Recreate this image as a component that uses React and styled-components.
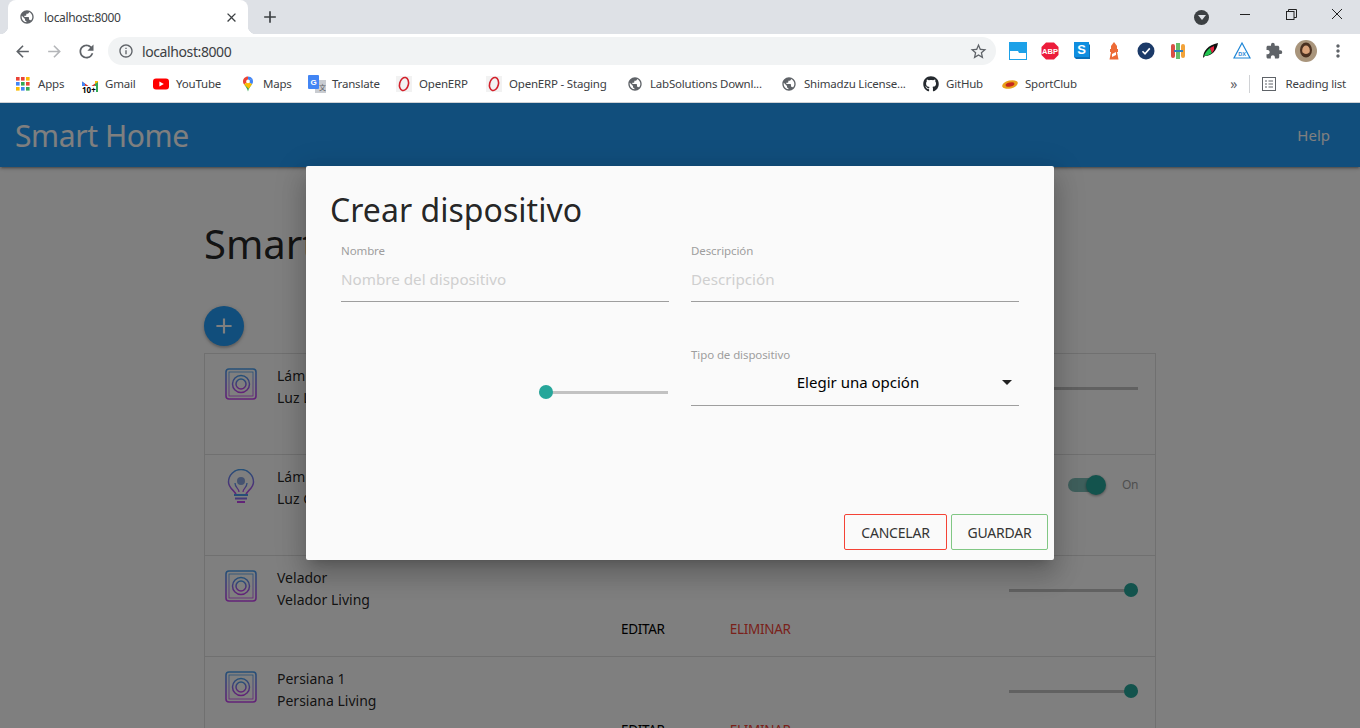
import React from "react";
import styled, { createGlobalStyle } from "styled-components";
import {
  MdAdd,
  MdArrowBack,
  MdArrowForward,
  MdClose,
  MdExtension,
  MdInfoOutline,
  MdMoreVert,
  MdPublic,
  MdRefresh,
  MdStarBorder,
} from "react-icons/md";
import { FaGithub } from "react-icons/fa";

const GlobalStyle = createGlobalStyle`
  html, body {
    margin: 0;
    padding: 0;
    height: 100%;
    overflow: hidden;
    background: #fff;
    font-family: "Noto Sans", "Open Sans", sans-serif;
  }
  * { box-sizing: border-box; }
`;

const AppsIcon = () => (
  <svg width="16" height="16" viewBox="0 0 16 16">
    {[
      ["#ea4335", "#ea4335", "#fbbc04"],
      ["#4285f4", "#34a853", "#ea4335"],
      ["#fbbc04", "#4285f4", "#34a853"],
    ].map((row, y) =>
      row.map((c, x) => <rect key={`${x}${y}`} x={1 + x * 5} y={1 + y * 5} width="3.6" height="3.6" fill={c} />)
    )}
  </svg>
);

const GmailIcon = () => (
  <GmailWrap>
    <svg width="16" height="12" viewBox="0 0 16 12">
      <path d="M0 1.5 L8 7 L16 1.5 V12 H13 V5.5 L8 9 L3 5.5 V12 H0 Z" fill="#d93025" />
      <path d="M0 1.5 L3 3.6 V12 H0 Z" fill="#4285f4" />
      <path d="M16 1.5 L13 3.6 V12 H16 Z" fill="#34a853" />
      <path d="M13 1 L16 1 V2 L13 4 Z" fill="#fbbc04" />
    </svg>
    <GmailBadge>10+</GmailBadge>
  </GmailWrap>
);

const YoutubeIcon = () => (
  <svg width="16" height="16" viewBox="0 0 16 16">
    <rect x="0" y="2.5" width="16" height="11" rx="3" fill="#f00" />
    <path d="M6.4 5.5 L10.8 8 L6.4 10.5 Z" fill="#fff" />
  </svg>
);

const MapsIcon = () => (
  <svg width="16" height="16" viewBox="0 0 16 16">
    <path d="M8 0.5 C4.8 0.5 3 2.9 3 5.4 C3 6.6 3.5 7.6 4.1 8.4 L8 5.4 Z" fill="#ea4335" />
    <path d="M8 0.5 C9.8 0.5 11.3 1.3 12.2 2.6 L8 5.4 Z" fill="#4285f4" />
    <path d="M12.2 2.6 C12.7 3.4 13 4.4 13 5.4 C13 6.4 12.6 7.3 12 8.2 L8 5.4 Z" fill="#4285f4" />
    <path d="M4.1 8.4 L12 8.2 C10.6 10.2 8.7 12.2 8 15.5 C7.4 12.6 5.6 10.4 4.1 8.4 Z" fill="#34a853" />
    <path d="M4.1 8.4 L8 5.4 L12 8.2 C10.8 9.8 9.6 11.2 8.8 12.8 Z" fill="#fbbc04" />
    <circle cx="8" cy="5.4" r="1.8" fill="#fff" />
  </svg>
);

const TranslateIcon = () => (
  <svg width="18" height="18" viewBox="0 0 18 18">
    <rect x="7" y="5" width="11" height="13" fill="#c9ccd1" />
    <rect x="0" y="0" width="11" height="14" rx="1" fill="#4285f4" />
    <text x="2.6" y="10" fontSize="8" fontWeight="700" fill="#fff" fontFamily="Liberation Sans">G</text>
    <text x="11" y="15" fontSize="7" fill="#5f6368" fontFamily="Noto Sans CJK SC">文</text>
  </svg>
);

const OperaIcon = () => (
  <svg width="16" height="16" viewBox="0 0 16 16">
    <rect width="16" height="16" fill="#f2f2f2" />
    <ellipse cx="8" cy="8" rx="4.4" ry="6.6" transform="rotate(14 8 8)" fill="none" stroke="#d3202b" strokeWidth="1.6" />
  </svg>
);

const SportIcon = () => (
  <svg width="18" height="12" viewBox="0 0 18 12">
    <ellipse cx="9" cy="6.5" rx="8" ry="4" transform="rotate(-14 9 6.5)" fill="#e8a11b" />
    <ellipse cx="9" cy="6.5" rx="4.5" ry="2" transform="rotate(-14 9 6.5)" fill="#c6271d" />
  </svg>
);

const Square = ({ children }) => (
  <svg width="20" height="20" viewBox="0 0 20 20">
    {children}
  </svg>
);

const extensions = [
  <Square key="a">
    <rect x="1" y="1" width="18" height="18" fill="#1da1e8" />
    <path d="M2 10 H10 L11 12 H18 V18 H2 Z" fill="#fff" />
  </Square>,
  <Square key="b">
    <path d="M6 1.5 H14 L18.5 6 V14 L14 18.5 H6 L1.5 14 V6 Z" fill="#ec1c3b" />
    <text x="10" y="13" textAnchor="middle" fontSize="7.5" fontWeight="700" fill="#fff" fontFamily="Liberation Sans">ABP</text>
  </Square>,
  <Square key="c">
    <path d="M2 2 H16 L18 4 V18 L16 18 H4 L2 16 Z" fill="#0b6fb8" />
    <rect x="2" y="1" width="15" height="15" fill="#0f8ee0" />
    <text x="9.5" y="13" textAnchor="middle" fontSize="13" fontWeight="700" fill="#fff" fontFamily="Liberation Sans">S</text>
  </Square>,
  <Square key="d">
    <path d="M10 1 L13 5 V8 H14 V11 H13 L14.5 18.5 H5.5 L7 11 H6 V8 H7 V5 Z" fill="#ed6a35" />
    <path d="M8 13 L12 11 V14 L8 16 Z" fill="#fff" />
  </Square>,
  <Square key="e">
    <circle cx="10" cy="10" r="8.5" fill="#1b3a68" />
    <path d="M6.5 10.2 L9 12.8 L13.8 7.4" stroke="#fff" strokeWidth="1.6" fill="none" />
  </Square>,
  <Square key="f">
    <rect x="3" y="3" width="4" height="14" rx="2" fill="#d94f45" />
    <rect x="8" y="2" width="4" height="16" fill="#4caf50" opacity="0.85" />
    <rect x="13" y="3" width="4" height="14" rx="2" fill="#f2a33a" />
    <rect x="6" y="9" width="9" height="2" fill="#2f7fc1" />
  </Square>,
  <Square key="g">
    <path d="M3 17 C3 10 8 4 18 2 C17 9 12 15 5 15 Z" fill="#111" />
    <path d="M4 15 C5 12 7 9 10 7 L12 12 C9 14 7 15 4 15 Z" fill="#23c552" />
    <path d="M10 7 L14 5 L14 9 L12 12 Z" fill="#e8213f" />
  </Square>,
  <Square key="h">
    <path d="M10 2 L18 17 H2 Z" fill="none" stroke="#1f86d6" strokeWidth="1.2" />
    <text x="10" y="15" textAnchor="middle" fontSize="5.5" fontWeight="700" fill="#1f86d6" fontFamily="Liberation Sans">DX</text>
  </Square>,
];

const bookmarks = [
  { icon: <AppsIcon />, label: "Apps", w: 27 },
  { icon: <GmailIcon />, label: "Gmail", w: 31 },
  { icon: <YoutubeIcon />, label: "YouTube", w: 47 },
  { icon: <MapsIcon />, label: "Maps", w: 29 },
  { icon: <TranslateIcon />, label: "Translate", w: 47 },
  { icon: <OperaIcon />, label: "OpenERP", w: 50 },
  { icon: <OperaIcon />, label: "OpenERP - Staging", w: 101 },
  { icon: <MdPublic size={16} color="#5f6368" />, label: "LabSolutions Downl...", w: 114 },
  { icon: <MdPublic size={16} color="#5f6368" />, label: "Shimadzu License...", w: 102 },
  { icon: <FaGithub size={16} color="#24292e" />, label: "GitHub", w: 39 },
  { icon: <SportIcon />, label: "SportClub", w: 53 },
];

const PlugIcon = () => (
  <svg width="32" height="32" viewBox="0 0 32 32" fill="none">
    <defs>
      <linearGradient id="plugGrad" x1="0" y1="0" x2="0" y2="1">
        <stop offset="0" stopColor="#4aa0f0" />
        <stop offset="1" stopColor="#c744f0" />
      </linearGradient>
    </defs>
    <rect x="1" y="1" width="30" height="30" rx="3" stroke="url(#plugGrad)" strokeWidth="1.6" />
    <rect x="4" y="4" width="24" height="24" stroke="url(#plugGrad)" strokeWidth="0.8" />
    <circle cx="16" cy="16" r="8.5" stroke="url(#plugGrad)" strokeWidth="1.5" />
    <circle cx="16" cy="16" r="5" stroke="url(#plugGrad)" strokeWidth="1.5" />
    <path d="M16 8 V11.5" stroke="url(#plugGrad)" strokeWidth="1.6" />
  </svg>
);

const BulbIcon = () => (
  <svg width="32" height="36" viewBox="0 0 32 36" fill="none">
    <defs>
      <linearGradient id="bulbGrad" x1="0" y1="0" x2="0" y2="1">
        <stop offset="0" stopColor="#4aa0f0" />
        <stop offset="1" stopColor="#c744f0" />
      </linearGradient>
    </defs>
    <path d="M11 26 C11 22 3.5 20 3.5 13 A12.5 12.5 0 0 1 28.5 13 C28.5 20 21 22 21 26 Z" stroke="url(#bulbGrad)" strokeWidth="1.5" />
    <circle cx="16" cy="12" r="4" fill="#8ba7e0" />
    <path d="M10 14 C10 19 14 19 14 23 M22 14 C22 19 18 19 18 23" stroke="url(#bulbGrad)" strokeWidth="1.3" />
    <path d="M9 26 H23 M10 29.5 H22 M12 33 H20" stroke="url(#bulbGrad)" strokeWidth="2" />
  </svg>
);

const devices = [
  { name: "Lámpara 1", info: "Luz Living", icon: "plug", control: "slider", value: 0 },
  { name: "Lámpara 2", info: "Luz Comedor", icon: "bulb", control: "switch" },
  { name: "Velador", info: "Velador Living", icon: "plug", control: "slider", value: 100 },
  { name: "Persiana 1", info: "Persiana Living", icon: "plug", control: "slider", value: 100 },
];

const App = () => {
  return (
    <Page>
      <GlobalStyle />
      <TabStrip>
        <Tab>
          <MdPublic size={16} color="#5f6368" />
          <TabTitle>localhost:8000</TabTitle>
          <MdClose size={15} color="#3c4043" />
        </Tab>
        <NewTab>
          <MdAdd size={20} color="#3c4043" />
        </NewTab>
        <ProfileDot />
        <WindowButtons>
          <WinButton>
            <MinIcon />
          </WinButton>
          <WinButton>
            <svg width="11" height="11" viewBox="0 0 11 11" fill="none" stroke="#222">
              <rect x="0.5" y="2.5" width="7.5" height="8" />
              <path d="M2.5 2.5 V0.5 H10.5 V8.5 H8" />
            </svg>
          </WinButton>
          <WinButton>
            <svg width="12" height="12" viewBox="0 0 12 12" stroke="#222">
              <path d="M1 1 L11 11 M11 1 L1 11" />
            </svg>
          </WinButton>
        </WindowButtons>
      </TabStrip>

      <Toolbar>
        <ToolButton>
          <MdArrowBack size={19} color="#5f6368" />
        </ToolButton>
        <ToolButton>
          <MdArrowForward size={19} color="#b4b6b9" />
        </ToolButton>
        <ToolButton>
          <MdRefresh size={21} color="#5f6368" />
        </ToolButton>
        <Omnibox>
          <MdInfoOutline size={16} color="#5f6368" />
          <OmniText>localhost:8000</OmniText>
          <MdStarBorder size={19} color="#5f6368" />
        </Omnibox>
        <Extensions>
          {extensions.map((ext, i) => (
            <ToolButton key={i}>{ext}</ToolButton>
          ))}
          <ToolButton>
            <MdExtension size={18} color="#5f6368" />
          </ToolButton>
          <ToolButton>
            <svg width="22" height="22" viewBox="0 0 22 22">
              <circle cx="11" cy="11" r="11" fill="#a9957c" />
              <ellipse cx="11" cy="10" rx="6" ry="7.5" fill="#4a3020" />
              <ellipse cx="11" cy="10.5" rx="3.8" ry="5" fill="#d9a27a" />
              <path d="M7.4 12 C8 18 14 18 14.6 12 C13 14.5 9 14.5 7.4 12 Z" fill="#4a3020" />
            </svg>
          </ToolButton>
          <ToolButton>
            <MdMoreVert size={20} color="#5f6368" />
          </ToolButton>
        </Extensions>
      </Toolbar>

      <BookmarkBar>
        {bookmarks.map((b) => (
          <Bookmark key={b.label}>
            <BookmarkIcon>{b.icon}</BookmarkIcon>
            <BookmarkLabel $w={b.w}>{b.label}</BookmarkLabel>
          </Bookmark>
        ))}
        <BookmarkEnd>
          <More>»</More>
          <Separator />
          <svg width="14" height="14" viewBox="0 0 14 14" fill="none" stroke="#5f6368">
            <rect x="0.5" y="0.5" width="13" height="13" />
            <path d="M3 4 H5 M3 7 H5 M3 10 H5 M6.5 4 H11 M6.5 7 H11 M6.5 10 H11" />
          </svg>
          <ReadingLabel>Reading list</ReadingLabel>
        </BookmarkEnd>
      </BookmarkBar>

      <Viewport>
        <Navbar>
          <Brand>Smart Home</Brand>
          <NavLink>Help</NavLink>
        </Navbar>
        <Main>
          <PageTitle>Smart Home</PageTitle>
          <Fab>
            <MdAdd size={26} color="#fff" />
          </Fab>
          <DeviceList>
            {devices.map((d) => (
              <DeviceRow key={d.name}>
                <DeviceIcon>{d.icon === "plug" ? <PlugIcon /> : <BulbIcon />}</DeviceIcon>
                <DeviceText>
                  <DeviceName>{d.name}</DeviceName>
                  <DeviceName>{d.info}</DeviceName>
                </DeviceText>
                {d.control === "slider" ? (
                  <DeviceSlider>
                    <Track>
                      <Thumb $value={d.value} />
                    </Track>
                  </DeviceSlider>
                ) : (
                  <SwitchWrap>
                    <SwitchTrack>
                      <SwitchKnob />
                    </SwitchTrack>
                    <SwitchLabel>On</SwitchLabel>
                  </SwitchWrap>
                )}
                <Actions>
                  <ActionLink>EDITAR</ActionLink>
                  <ActionLink $danger>ELIMINAR</ActionLink>
                </Actions>
              </DeviceRow>
            ))}
          </DeviceList>
        </Main>

        <Overlay />
        <Modal>
          <ModalTitle>Crear dispositivo</ModalTitle>
          <FormGrid>
            <Field>
              <FieldLabel>Nombre</FieldLabel>
              <FieldValue>Nombre del dispositivo</FieldValue>
            </Field>
            <Field>
              <FieldLabel>Descripción</FieldLabel>
              <FieldValue>Descripción</FieldValue>
            </Field>
            <RangeField>
              <ModalTrack>
                <Thumb $value={0} />
              </ModalTrack>
            </RangeField>
            <Field>
              <FieldLabel>Tipo de dispositivo</FieldLabel>
              <SelectValue>
                Elegir una opción
                <Caret />
              </SelectValue>
            </Field>
          </FormGrid>
          <ModalFooter>
            <OutlineButton $color="#f44336" $w={103}>CANCELAR</OutlineButton>
            <OutlineButton $color="#81c784" $w={97}>GUARDAR</OutlineButton>
          </ModalFooter>
        </Modal>
      </Viewport>
    </Page>
  );
};

export default App;

const Page = styled.div`
  width: 100%;
  height: 100vh;
  display: flex;
  flex-direction: column;
  overflow: hidden;
`;

const TabStrip = styled.div`
  height: 34px;
  flex-shrink: 0;
  background: #dee1e6;
  display: flex;
  align-items: center;
  padding-left: 8px;
`;

const Tab = styled.div`
  position: relative;
  width: 240px;
  height: 34px;
  background: #fff;
  border-radius: 8px 8px 0 0;
  display: flex;
  align-items: center;
  padding: 0 9px 0 11px;
  &::before,
  &::after {
    content: "";
    position: absolute;
    bottom: 0;
    width: 8px;
    height: 8px;
  }
  &::before {
    left: -8px;
    background: radial-gradient(circle at 0 0, #dee1e6 8px, #fff 8.5px);
  }
  &::after {
    right: -8px;
    background: radial-gradient(circle at 100% 0, #dee1e6 8px, #fff 8.5px);
  }
`;

const TabTitle = styled.div`
  flex: 1;
  margin-left: 9px;
  font-size: 12px;
  letter-spacing: -0.35px;
  color: #3c4043;
`;

const NewTab = styled.div`
  width: 28px;
  margin-left: 8px;
  display: flex;
  justify-content: center;
`;

const ProfileDot = styled.div`
  width: 15px;
  height: 15px;
  margin-left: auto;
  border-radius: 50%;
  background: #3c4043;
  position: relative;
  &::after {
    content: "";
    position: absolute;
    left: 3.5px;
    top: 5.5px;
    border-left: 4px solid transparent;
    border-right: 4px solid transparent;
    border-top: 5px solid #dee1e6;
  }
`;

const WindowButtons = styled.div`
  display: flex;
  margin-left: 13px;
  margin-top: -6px;
`;

const WinButton = styled.div`
  width: 46px;
  height: 30px;
  display: flex;
  align-items: center;
  justify-content: center;
`;

const MinIcon = styled.div`
  width: 10px;
  height: 1px;
  background: #222;
`;

const Toolbar = styled.div`
  height: 34px;
  flex-shrink: 0;
  background: #fff;
  display: flex;
  align-items: center;
  padding-left: 6px;
`;

const ToolButton = styled.div`
  width: 32px;
  height: 28px;
  display: flex;
  align-items: center;
  justify-content: center;
  flex-shrink: 0;
`;

const Omnibox = styled.div`
  width: 888px;
  height: 28px;
  margin-left: 6px;
  padding: 0 8px 0 10px;
  border-radius: 14px;
  background: #f1f3f4;
  display: flex;
  align-items: center;
`;

const OmniText = styled.div`
  flex: 1;
  margin-left: 8px;
  font-size: 14px;
  letter-spacing: -0.4px;
  color: #3c4043;
`;

const Extensions = styled.div`
  display: flex;
  margin-left: 6px;
`;

const BookmarkBar = styled.div`
  height: 35px;
  flex-shrink: 0;
  background: #fff;
  border-bottom: 1px solid #d0d2d5;
  display: flex;
  align-items: center;
  padding: 0 0 3px 14px;
  gap: 16px;
`;

const Bookmark = styled.div`
  display: flex;
  align-items: center;
  gap: 6px;
`;

const BookmarkIcon = styled.div`
  width: 18px;
  height: 18px;
  display: flex;
  align-items: center;
  justify-content: center;
`;

const BookmarkLabel = styled.div`
  width: ${(p) => p.$w}px;
  font-size: 11.5px;
  letter-spacing: -0.2px;
  white-space: nowrap;
  color: #3c4043;
`;

const GmailWrap = styled.div`
  position: relative;
  width: 16px;
  height: 18px;
`;

const GmailBadge = styled.span`
  position: absolute;
  left: 0;
  bottom: -1px;
  font-size: 8px;
  line-height: 8px;
  font-weight: 700;
  color: #000;
  background: #fff;
`;

const BookmarkEnd = styled.div`
  margin-left: auto;
  display: flex;
  align-items: center;
  padding-right: 14px;
`;

const More = styled.div`
  font-size: 14px;
  color: #5f6368;
  margin-right: 11px;
`;

const Separator = styled.div`
  width: 1px;
  height: 18px;
  background: #d0d2d5;
  margin-right: 12px;
`;

const ReadingLabel = styled.div`
  margin-left: 10px;
  font-size: 11.5px;
  letter-spacing: -0.2px;
  color: #3c4043;
`;

const Viewport = styled.div`
  position: relative;
  flex: 1;
  overflow: hidden;
  background: #fff;
`;

const Navbar = styled.div`
  height: 64px;
  background: #229cf8;
  box-shadow: 0 2px 2px rgba(0, 0, 0, 0.14), 0 3px 1px -2px rgba(0, 0, 0, 0.12),
    0 1px 5px rgba(0, 0, 0, 0.2);
  display: flex;
  align-items: center;
  justify-content: space-between;
  padding: 0 30px 0 15px;
`;

const Brand = styled.div`
  font-size: 30px;
  color: #fff;
  letter-spacing: -0.4px;
`;

const NavLink = styled.div`
  font-size: 15px;
  color: #fff;
`;

const Main = styled.div`
  width: 952px;
  margin-left: 204px;
`;

const PageTitle = styled.div`
  margin-top: 49px;
  font-size: 40px;
  line-height: 56px;
  color: rgba(0, 0, 0, 0.87);
`;

const Fab = styled.div`
  width: 40px;
  height: 40px;
  margin-top: 34px;
  border-radius: 50%;
  background: #229cf8;
  box-shadow: 0 2px 2px rgba(0, 0, 0, 0.14), 0 1px 5px rgba(0, 0, 0, 0.2);
  display: flex;
  align-items: center;
  justify-content: center;
`;

const DeviceList = styled.div`
  margin-top: 7px;
  border: 1px solid #e0e0e0;
  border-bottom: none;
`;

const DeviceRow = styled.div`
  height: 101px;
  border-bottom: 1px solid #e0e0e0;
  display: grid;
  grid-template-columns: 32px 1fr auto;
  grid-template-rows: 50px auto;
  column-gap: 20px;
  padding: 14px 17px 0 20px;
`;

const DeviceIcon = styled.div`
  display: flex;
  justify-content: center;
`;

const DeviceText = styled.div`
  display: flex;
  flex-direction: column;
  gap: 2px;
  margin-top: -2px;
`;

const DeviceName = styled.div`
  font-size: 14px;
  line-height: 20px;
  color: rgba(0, 0, 0, 0.87);
`;

const DeviceSlider = styled.div`
  width: 129px;
  padding-top: 19px;
`;

const Track = styled.div`
  position: relative;
  height: 3px;
  background: #c2c2c2;
`;

const ModalTrack = styled(Track)`
  width: 129px;
  margin-right: 1px;
`;

const Thumb = styled.div`
  position: absolute;
  top: -6px;
  left: calc((100% - 14px) * ${(p) => p.$value / 100});
  width: 14px;
  height: 14px;
  border-radius: 50%;
  background: #26a69a;
`;

const SwitchWrap = styled.div`
  width: 70px;
  height: 28px;
  padding-top: 8px;
  display: flex;
  align-items: flex-start;
  justify-content: space-between;
`;

const SwitchTrack = styled.div`
  position: relative;
  width: 36px;
  height: 14px;
  margin-top: 1px;
  border-radius: 7px;
  background: #7fbfb9;
`;

const SwitchKnob = styled.div`
  position: absolute;
  right: -2px;
  top: -3px;
  width: 20px;
  height: 20px;
  border-radius: 50%;
  background: #26a69a;
  box-shadow: 0 1px 3px rgba(0, 0, 0, 0.4);
`;

const SwitchLabel = styled.div`
  font-size: 12px;
  line-height: 16px;
  letter-spacing: -0.4px;
  color: #9e9e9e;
`;

const Actions = styled.div`
  grid-column: 1 / -1;
  display: flex;
  gap: 65px;
  padding-left: 396px;
`;

const ActionLink = styled.div`
  font-size: 13.5px;
  line-height: 18px;
  letter-spacing: -0.3px;
  color: ${(p) => (p.$danger ? "#f44336" : "#000")};
`;

const Overlay = styled.div`
  position: absolute;
  inset: 0;
  background: rgba(0, 0, 0, 0.5);
`;

const Modal = styled.div`
  position: absolute;
  top: 63px;
  left: 306px;
  width: 748px;
  height: 394px;
  background: #fafafa;
  border-radius: 2px;
  box-shadow: 0 16px 24px 2px rgba(0, 0, 0, 0.14), 0 6px 30px 5px rgba(0, 0, 0, 0.12),
    0 8px 10px -7px rgba(0, 0, 0, 0.2);
  display: flex;
  flex-direction: column;
  padding: 21px 6px 10px 24px;
`;

const ModalTitle = styled.div`
  font-size: 32px;
  line-height: 46px;
  letter-spacing: 0.03px;
  color: rgba(0, 0, 0, 0.87);
`;

const FormGrid = styled.div`
  display: grid;
  grid-template-columns: 328px 328px;
  column-gap: 22px;
  row-gap: 46px;
  margin: 11px 0 0 11px;
`;

const Field = styled.div`
  height: 58px;
  border-bottom: 1px solid #9e9e9e;
`;

const FieldLabel = styled.div`
  font-size: 11.5px;
  line-height: 14px;
  letter-spacing: -0.1px;
  color: #9e9e9e;
`;

const FieldValue = styled.div`
  margin-top: 7px;
  font-size: 15.2px;
  line-height: 28px;
  color: #cfcfcf;
`;

const SelectValue = styled.div`
  position: relative;
  margin-top: 6px;
  padding-left: 6px;
  font-size: 15px;
  line-height: 28px;
  text-align: center;
  color: #000;
`;

const Caret = styled.span`
  position: absolute;
  right: 7px;
  top: 12px;
  border-left: 5px solid transparent;
  border-right: 5px solid transparent;
  border-top: 5px solid #222;
`;

const RangeField = styled.div`
  display: flex;
  justify-content: flex-end;
  padding-top: 43px;
`;

const ModalFooter = styled.div`
  margin-top: auto;
  display: flex;
  justify-content: flex-end;
  gap: 4px;
`;

const OutlineButton = styled.div`
  width: ${(p) => p.$w}px;
  height: 36px;
  border: 1px solid ${(p) => p.$color};
  border-radius: 2px;
  display: flex;
  align-items: center;
  justify-content: center;
  font-size: 14px;
  letter-spacing: -0.2px;
  color: #343434;
`;
